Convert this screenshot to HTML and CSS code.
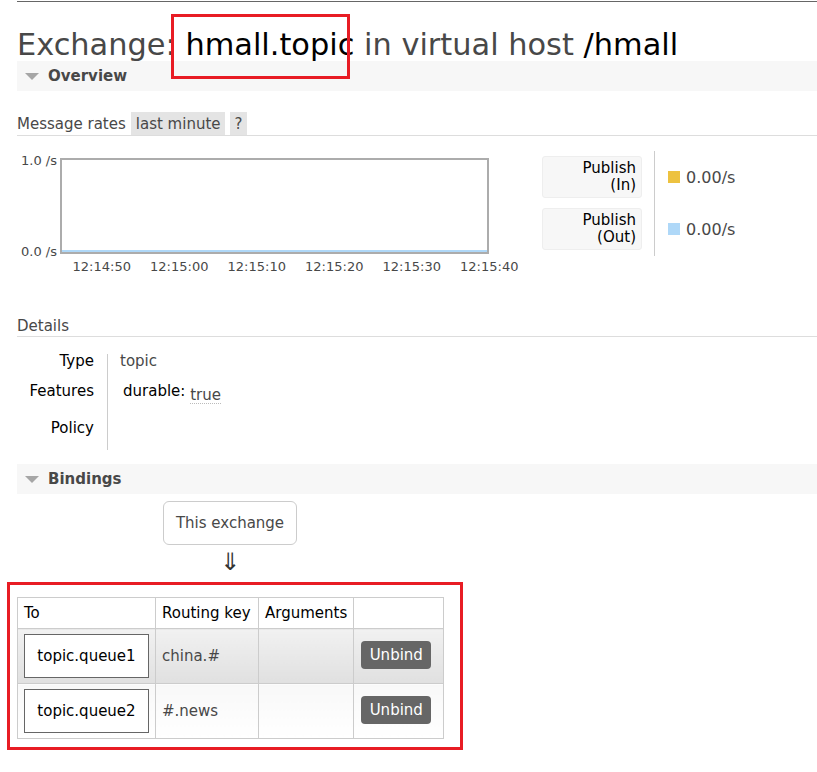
FILE: index.html
```html
<!DOCTYPE html>
<html>
<head>
<meta charset="utf-8">
<title>Exchange: hmall.topic</title>
<link rel="stylesheet" href="styles.css">
</head>
<body>
<div class="page">
  <div class="topline"></div>
  <h1 class="title">Exchange: <b class="em">hmall.topic</b> in virtual host <b class="em">/hmall</b></h1>
  <div class="annot-title"></div>

  <div class="section-bar"><span class="tri"></span>Overview</div>

  <div class="rates-row">
    <span class="rates-label">Message rates</span>
    <span class="chip">last minute</span>
    <span class="chip">?</span>
  </div>

  <div class="chart-section">
    <div class="chart-block">
      <div class="chart-row">
        <div class="yaxis"><span>1.0 /s</span><span>0.0 /s</span></div>
        <div class="plot"></div>
      </div>
      <div class="xaxis">
        <span>12:14:50</span><span>12:15:00</span><span>12:15:10</span><span>12:15:20</span><span>12:15:30</span><span>12:15:40</span>
      </div>
    </div>
    <div class="legend">
      <div class="legend-labels">
        <div class="legend-box"><span>Publish</span><span>(In)</span></div>
        <div class="legend-box"><span>Publish</span><span>(Out)</span></div>
      </div>
      <div class="legend-values">
        <div class="legend-val"><span class="swatch sw-in"></span>0.00/s</div>
        <div class="legend-val"><span class="swatch sw-out"></span>0.00/s</div>
      </div>
    </div>
  </div>

  <div class="subhead">Details</div>
  <div class="kv">
    <div class="kv-labels">
      <div class="kv-r1">Type</div>
      <div class="kv-r2">Features</div>
      <div class="kv-r3">Policy</div>
    </div>
    <div class="kv-values">
      <div class="kv-r1">topic</div>
      <div class="kv-r2"><span class="feat-key">durable:</span> <span class="feat-val">true</span></div>
      <div class="kv-r3"></div>
    </div>
  </div>

  <div class="section-bar bindings"><span class="tri"></span>Bindings</div>

  <div class="this-exchange">This exchange</div>
  <div class="arrow">⇓</div>

  <div class="annot-table">
    <table class="bindings-table">
      <thead>
        <tr><th class="c1">To</th><th class="c2">Routing key</th><th class="c3">Arguments</th><th class="c4"></th></tr>
      </thead>
      <tbody>
        <tr class="alt1">
          <td class="c1"><div class="queue">topic.queue1</div></td>
          <td class="c2 key">china.#</td>
          <td class="c3"></td>
          <td class="c4"><span class="btn">Unbind</span></td>
        </tr>
        <tr class="alt2">
          <td class="c1"><div class="queue">topic.queue2</div></td>
          <td class="c2 key">#.news</td>
          <td class="c3"></td>
          <td class="c4"><span class="btn">Unbind</span></td>
        </tr>
      </tbody>
    </table>
  </div>
</div>
</body>
</html>
```

FILE: styles.css
```css
* { box-sizing: border-box; }
html, body { margin: 0; padding: 0; background: #fff; }
body {
  font-family: "DejaVu Sans", Verdana, sans-serif;
  font-size: 15px;
  color: #484848;
}
.page { position: relative; padding-left: 17px; }

.topline { margin-top: 1px; border-top: 1px solid #666; }

.title {
  margin: 28px 0 1px;
  font-size: 30.4px;
  line-height: 30px;
  font-weight: normal;
  color: #484848;
  white-space: nowrap;
}
.title .em { font-weight: normal; color: #000; }

.annot-title {
  position: absolute;
  left: 171px;
  top: 13px;
  width: 179px;
  height: 65px;
  border: 3px solid #e81c24;
}

.section-bar {
  height: 30px;
  line-height: 30px;
  background: #f7f7f7;
  font-weight: bold;
  font-size: 15px;
  color: #484848;
  display: flex;
  align-items: center;
  padding-left: 8px;
}
.tri {
  width: 0; height: 0;
  border-left: 7px solid transparent;
  border-right: 7px solid transparent;
  border-top: 7px solid #a6a6a6;
  margin-right: 9px;
  margin-top: 1px;
}

.rates-row {
  margin-top: 21px;
  height: 24px;
  border-bottom: 1px solid #ddd;
  display: flex;
  align-items: stretch;
  gap: 5px;
  line-height: 25px;
}
.chip { background: #e4e4e4; padding: 0 4px 0 5px; }

.chart-section {
  margin-top: 15px;
  display: flex;
  align-items: flex-start;
}
.chart-block { width: 525px; margin-top: 7px; }
.chart-row { display: flex; align-items: flex-start; }
.yaxis {
  width: 43px;
  height: 105px;
  margin-top: -4px;
  padding-right: 3px;
  display: flex;
  flex-direction: column;
  justify-content: space-between;
  align-items: flex-end;
  font-size: 13px;
  line-height: 14px;
}
.plot {
  width: 429px;
  height: 96px;
  border: 2px solid #acacac;
  box-shadow: inset 0 -2px 0 #afd8f8;
}
.xaxis {
  display: flex;
  margin-top: 0;
  margin-left: 46px;
  font-size: 13px;
  line-height: 16px;
}
.xaxis span { width: 77.5px; text-align: center; }

.legend { display: flex; }
.legend-labels {
  display: flex;
  flex-direction: column;
  gap: 10px;
  padding: 5px 12px 6px 0;
  border-right: 1px solid #ccc;
}
.legend-box {
  width: 100px;
  height: 42px;
  background: #f7f7f7;
  border: 1px solid #eee;
  border-radius: 3px;
  text-align: right;
  padding-right: 5px;
  font-size: 15px;
  line-height: 17px;
  color: #000;
  display: flex;
  flex-direction: column;
  justify-content: center;
  align-items: flex-end;
}
.legend-values {
  display: flex;
  flex-direction: column;
  gap: 10px;
  padding: 5px 0 0 13px;
}
.legend-val {
  height: 42px;
  display: flex;
  align-items: center;
  font-size: 16px;
  color: #484848;
}
.swatch { width: 12px; height: 12px; margin-right: 6px; }
.sw-in { background: #edc240; }
.sw-out { background: #afd8f8; }

.subhead {
  margin-top: 42px;
  height: 20px;
  line-height: 19px;
  border-bottom: 1px solid #ddd;
}

.kv { display: flex; margin-top: 17px; }
.kv-labels {
  width: 91px;
  padding-right: 13px;
  padding-bottom: 7px;
  border-right: 1px solid #ccc;
  text-align: right;
  color: #000;
}
.kv-values { padding-left: 12px; padding-bottom: 7px; }
.kv-r1 { height: 14px; line-height: 14px; }
.kv-r2 { height: 46px; line-height: 46px; white-space: nowrap; }
.kv-r3 { height: 29px; line-height: 29px; }
.feat-key { color: #000; margin-left: 3px; }
.feat-val {
  display: inline-block;
  line-height: 15px;
  vertical-align: -4px;
  border-bottom: 1px dotted #bbb;
}

.bindings { margin-top: 14px; }

.this-exchange {
  margin: 7px 0 0 146px;
  width: 134px;
  height: 44px;
  border: 1px solid #ccc;
  border-radius: 6px;
  display: flex;
  align-items: center;
  justify-content: center;
}
.arrow {
  margin: 2px 0 0 146px;
  width: 134px;
  text-align: center;
  font-size: 24px;
  line-height: 30px;
  height: 35px;
  color: #333;
}

.annot-table {
  margin-left: -10px;
  width: 456px;
  border: 3px solid #e81c24;
  padding: 12px 0 8px 7px;
}
.bindings-table {
  border-collapse: collapse;
  border: 1px solid #ccc;
}
.bindings-table th,
.bindings-table td {
  border: 1px solid #ccc;
  padding: 0 6px;
  text-align: left;
  vertical-align: middle;
}
.bindings-table th {
  height: 31px;
  font-weight: normal;
  color: #000;
  background: #fff;
}
.bindings-table td { height: 55px; }
.c1 { width: 138px; }
.c2 { width: 103px; }
.c3 { width: 95px; }
.c4 { width: 90px; }
.bindings-table td.c4 { padding-left: 7px; }
.alt1 td { background: linear-gradient(#f1f1f1, #e0e0e0); }
.alt2 td { background: linear-gradient(#f8f8f8, #ffffff); }
.queue {
  width: 125px;
  height: 44px;
  border: 1px solid #666;
  background: #fff;
  color: #000;
  display: flex;
  align-items: center;
  justify-content: center;
}
.key { color: #484848; }
.btn {
  display: inline-flex;
  align-items: center;
  justify-content: center;
  width: 70px;
  height: 28px;
  background: #666;
  color: #fff;
  border-radius: 4px;
  margin-top: -3px;
}
```
